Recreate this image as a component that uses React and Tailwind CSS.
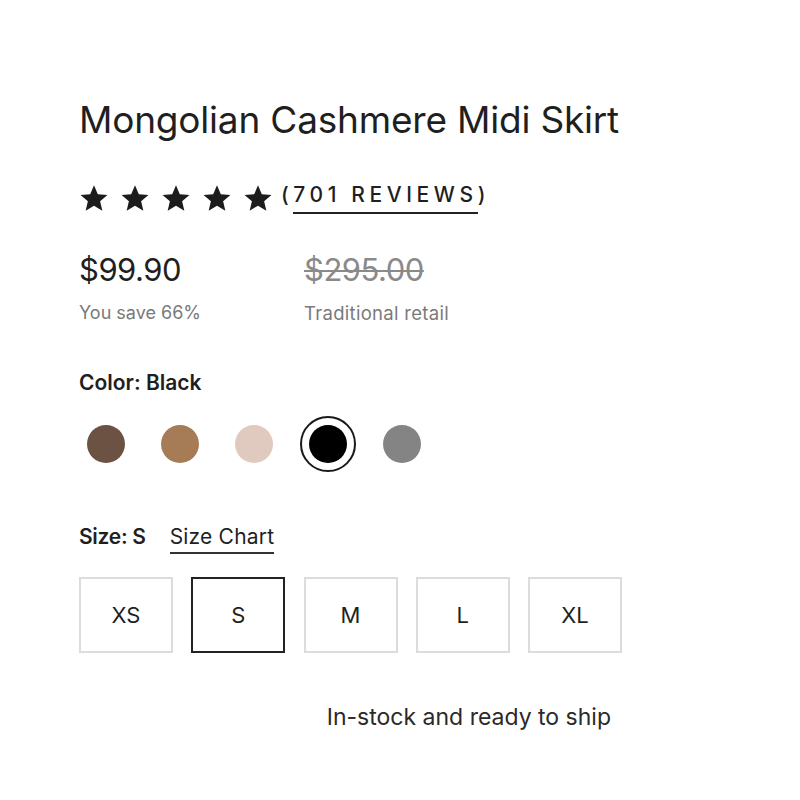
import React, { useState } from 'react'

const colors = [
    { name: 'Brown', hex: '#6b5242' },
    { name: 'Camel', hex: '#a67c56' },
    { name: 'Blush', hex: '#e0c9be' },
    { name: 'Black', hex: '#000000' },
    { name: 'Grey', hex: '#848484' },
];

const sizes = ['XS', 'S', 'M', 'L', 'XL'];

function Star() {
    return (
        <svg viewBox="0 0 24 24" className="w-[30px] h-[30px]" fill="#1c1c1c">
            <path d="M12 1.8l3.05 7.1 7.7.65-5.85 5.05 1.77 7.5L12 18.1l-6.67 4 1.77-7.5L1.25 9.55l7.7-.65z" />
        </svg>
    )
}

export default function App() {
    const [color, setColor] = useState('Black');
    const [size, setSize] = useState('S');

    return (
        <div className="min-h-screen bg-white text-[#1f1f1f] font-['Inter',sans-serif]">
            <div className="pl-[79px] pt-[96px]">
                <h1 className="text-[37px] leading-[48px] font-normal tracking-[-0.2px]">Mongolian Cashmere Midi Skirt</h1>

                <div className="flex items-center mt-[38px] h-[32px]">
                    <div className="flex gap-[11px]">
                        {[0, 1, 2, 3, 4].map((i) => <Star key={i} />)}
                    </div>
                    <a className="ml-[8px] text-[21px] font-medium tracking-[4.6px] text-[#1f1f1f] -mt-[6px]">
                        (<span className="border-b-2 border-[#222] pb-[5px]">701 REVIEWS</span>)
                    </a>
                </div>

                <div className="flex mt-[38px]">
                    <div className="w-[225px]">
                        <div className="text-[31px] leading-[36px] tracking-[-0.5px]">$99.90</div>
                        <div className="text-[18px] leading-[22px] text-[#7a7a7a] mt-[14px]">You save 66%</div>
                    </div>
                    <div>
                        <div className="text-[31px] leading-[36px] tracking-[-0.5px] text-[#8a8a8a] line-through decoration-[2px]">$295.00</div>
                        <div className="text-[18.5px] leading-[22px] text-[#7a7a7a] mt-[14px] tracking-[0.3px]">Traditional retail</div>
                    </div>
                </div>

                <div className="mt-[46px] text-[21px] leading-[26px] font-semibold">Color: {color}</div>

                <div className="flex items-center mt-[20px] -ml-[1px]">
                    {colors.map((c) => (
                        <button
                            key={c.name}
                            onClick={() => setColor(c.name)}
                            className={`w-[56px] h-[56px] mr-[18px] rounded-full flex items-center justify-center ${color === c.name ? 'border-2 border-[#1a1a1a]' : 'border-2 border-transparent'}`}
                        >
                            <span className="w-[38px] h-[38px] rounded-full block" style={{ backgroundColor: c.hex }} />
                        </button>
                    ))}
                </div>

                <div className="flex items-baseline mt-[52px] text-[21px] leading-[26px]">
                    <span className="font-semibold tracking-[-0.3px]">Size: {size}</span>
                    <a className="ml-[24px] border-b-2 border-[#333] pb-[2px] tracking-[0.2px]">Size Chart</a>
                </div>

                <div className="flex gap-[18.25px] mt-[23px]">
                    {sizes.map((s) => (
                        <button
                            key={s}
                            onClick={() => setSize(s)}
                            className={`w-[94px] h-[76px] flex items-center justify-center text-[22px] ${size === s ? 'border-2 border-[#222]' : 'border-2 border-[#dcdcdc]'}`}
                        >
                            {s}
                        </button>
                    ))}
                </div>

                <div className="w-[532px] flex justify-end mt-[50px]">
                    <p className="text-[23px] leading-[28px] text-[#2a2a2a]">In-stock and ready to ship</p>
                </div>
            </div>
        </div>
    )
}
